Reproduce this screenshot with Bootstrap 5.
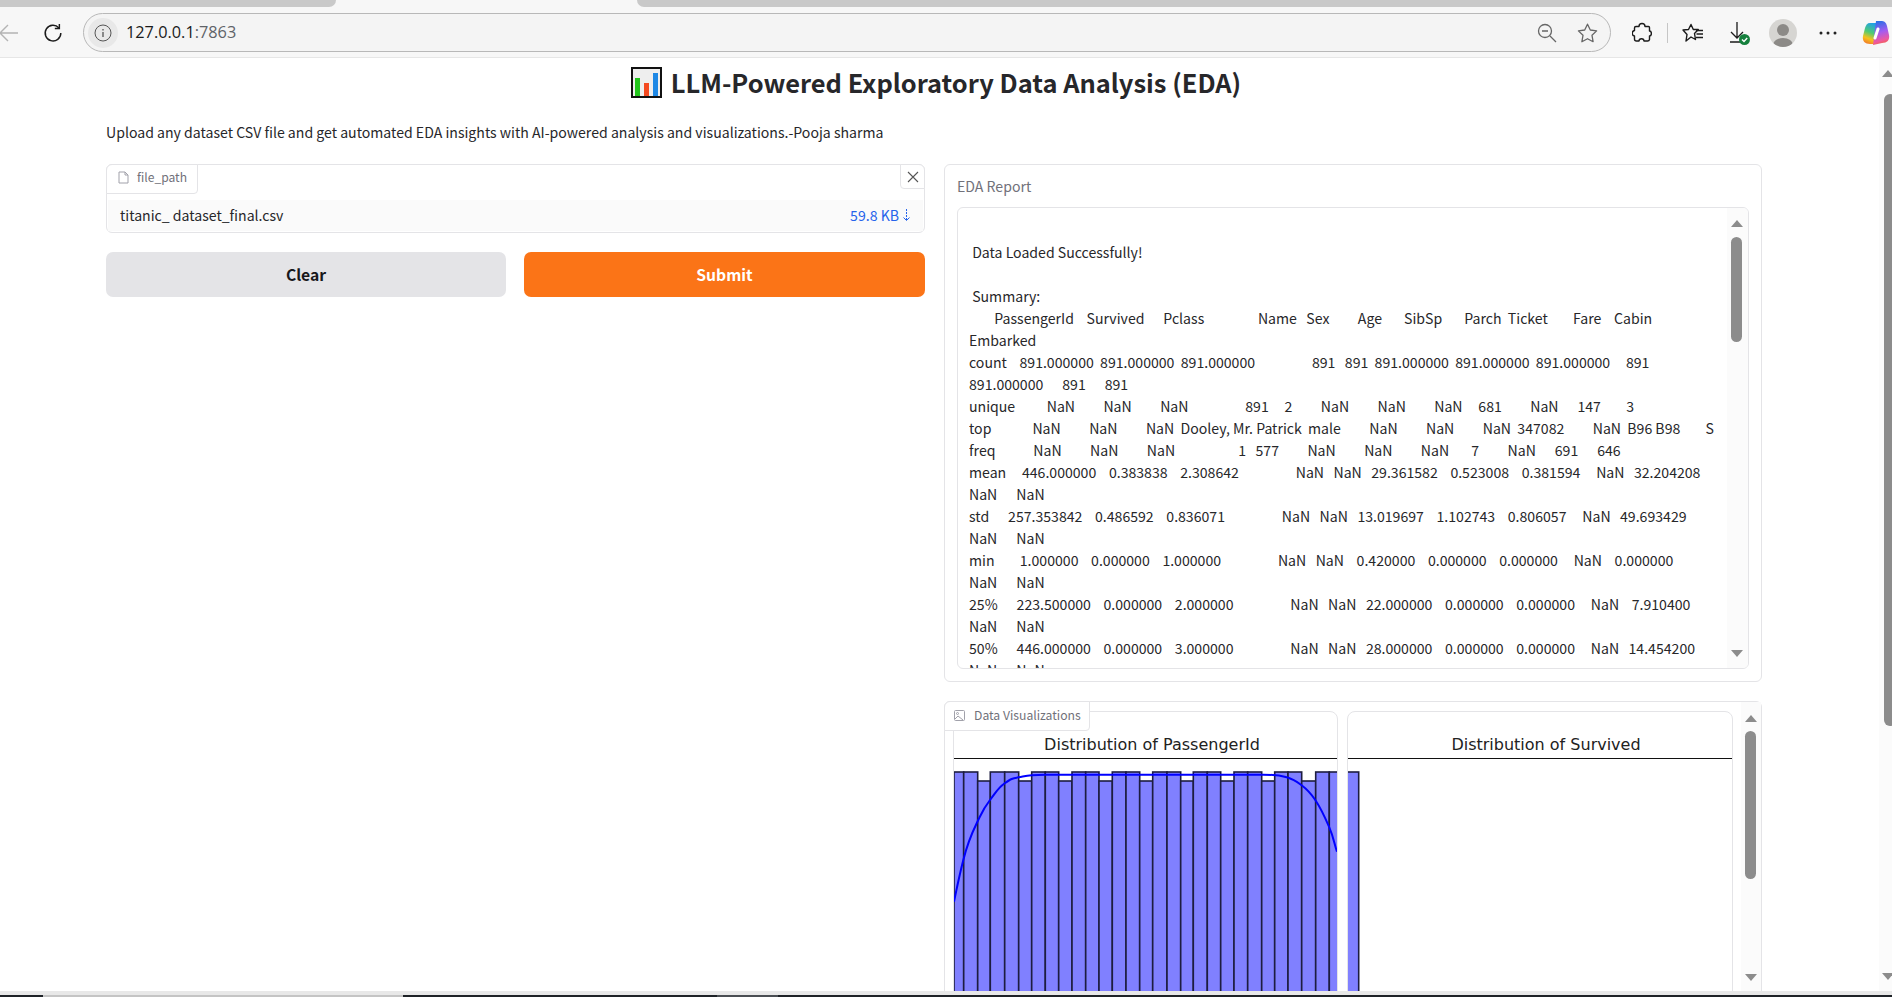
<!DOCTYPE html>
<html lang="en">
<head>
  <meta charset="UTF-8" />
  <meta name="viewport" content="width=device-width, initial-scale=1" />
  <title>LLM-Powered Exploratory Data Analysis (EDA)</title>
  <link href="https://cdn.jsdelivr.net/npm/bootstrap@5.3.3/dist/css/bootstrap.min.css" rel="stylesheet">
  <style>
    body {
      font-family: "Noto Sans CJK SC", "Noto Sans", sans-serif;
      color: #27272a;
      background: #fff;
      font-size: 14.1px;
    }
    /* browser chrome */
    .tab-strip { height: 7px; background: #f7f7f7; }
    .tab-left { width: 336px; background: #c9c9c9; border-bottom-right-radius: 7px; }
    .tab-right { background: #c9c9c9; border-bottom-left-radius: 7px; margin-left: 301px; }
    .tool-bar { height: 51px; background: #f7f7f7; border-bottom: 1px solid #e6e6e6; padding-top: 1px; }
    .slot-back { width: 18px; }
    .slot-reload { width: 20px; margin-left: 25px; margin-right: 20px; }
    .addr-bar {
      width: 1528px; height: 39px; border: 1px solid #b8b8b8; border-radius: 20px;
      background: #f4f4f4; padding-left: 4px; padding-right: 12px;
      font-family: "Open Sans", sans-serif;
    }
    .addr-info { width: 30px; height: 30px; border-radius: 50%; background: #e8e8e8; }
    .addr-text { margin-left: 8px; font-size: 16.300px; color: #1a1a1a; }
    .addr-text span { color: #5f6368; }
    .addr-icons { gap: 20px; }
    .ico-puzzle { margin-left: 21px; }
    .tool-sep { width: 1px; height: 20px; background: #c6c6c6; margin: 0 14px 0 15px; }
    .ico-down { margin-left: 23px; }
    .avatar-dot { width: 28px; height: 28px; border-radius: 50%; background: #d6d5d2; overflow: hidden; margin-left: 18px; }
    .ico-dots { margin-left: 22px; }
    .ico-copilot { margin-left: 24px; }
    /* page */
    .page-body { height: 933px; padding-left: 106px; }
    .page-inner { width: 1656px; }
    .page-title { height: 31px; margin-top: 9px; gap: 9px; padding-left: 4px; }
    .page-title h1 { font-size: 25.45px; font-weight: 600; line-height: 31px; margin: -2px 0 0; }
    .page-desc { font-size: 14.1px; line-height: 22px; margin: 23px 0 21px; }
    .col-left { width: 819px; margin-right: 19px; }
    .col-right { width: 818px; }
    .panel-box { border: 1px solid #e4e4e7; border-radius: 6px; background: #fff; position: relative; }
    .file-panel { height: 69px; }
    .file-tab {
      position: absolute; left: -1px; top: -1px; width: 92px; height: 30px; font-size: 12.1px; color: #71717a;
      border: 1px solid #e4e4e7; border-radius: 6px 0 4px 0; padding: 0 0 3px 11px; gap: 8px; background: #fff;
    }
    .file-close {
      position: absolute; right: -1px; top: -1px; width: 25px; height: 25px;
      border: 1px solid #e4e4e7; border-radius: 0 6px 0 4px; background: #fff;
    }
    .file-row {
      position: absolute; left: 1px; right: 1px; top: 35px; height: 31px; background: #fafafa;
      padding: 0 13px 0 12px; font-size: 14.1px;
    }
    .file-size { color: #2563eb; font-size: 14.1px; gap: 4px; }
    .act-row { margin-top: 19px; gap: 18px; }
    .act-btn { height: 45px; border: 0; border-radius: 7px; font-weight: 600; font-size: 15.700px; padding: 0; }
    .act-clear { background: #e4e4e7; color: #18181b; width: 400px; }
    .act-submit { background: #fb7417; color: #fff; width: 401px; }
    .report-panel { height: 518px; padding: 11px 12px 12px; }
    .report-label { color: #71717a; font-size: 14.1px; line-height: 20px; margin-bottom: 11px; }
    .report-box {
      height: 462px; border: 1px solid #e4e4e7; border-radius: 6px; padding: 11px 11px;
      overflow: hidden; position: relative;
    }
    .report-text {
      font-family: inherit; font-size: 14.1px; line-height: 22px; margin: 0; white-space: pre;
      color: #27272a; overflow: hidden;
    }
    .scroll-gutter { position: absolute; top: 0; bottom: 0; right: 0; width: 20px; background: #fbfbfb; }
    .scroll-thumb { position: absolute; background: #8c8c8c; border-radius: 6px; left: 4px; width: 11px; }
    .arrow-up, .arrow-down {
      position: absolute; left: 4px; width: 0; height: 0;
      border-left: 6px solid transparent; border-right: 6px solid transparent;
    }
    .arrow-up { border-bottom: 7px solid #8c8c8c; }
    .arrow-down { border-top: 7px solid #8c8c8c; }
    .report-box .scroll-gutter { width: 21px; }
    .report-box .arrow-up { top: 12px; }
    .report-box .arrow-down { top: 442px; }
    .report-box .scroll-thumb { top: 29px; height: 105px; }
    .viz-panel { margin-top: 19px; height: 420px; padding: 9px 0 0 8px; gap: 9px; }
    .viz-tab {
      position: absolute; left: -1px; top: -1px; width: 146px; height: 30px; z-index: 2;
      background: #fff; border: 1px solid #e4e4e7; border-radius: 6px 0 4px 0;
      color: #71717a; font-size: 12.2px; padding: 0 0 2px 9px; gap: 9px;
    }
    .chart-card { height: 400px; border: 1px solid #e4e4e7; border-radius: 8px; overflow: hidden; background: #fff; }
    .chart-a { width: 385px; }
    .chart-b { width: 386px; }
    .chart-title {
      width: 396px; height: 47px; border-bottom: 1.5px solid #111; text-align: center; padding-top: 21px;
      font-family: "DejaVu Sans", sans-serif; font-size: 16px; line-height: 24px; color: #222;
    }
    .chart-svg { display: block; }
    .bar-rect { fill: #8080ff; stroke: #1d1d40; stroke-width: 1.6; }
    .kde-line { fill: none; stroke: #0000ff; stroke-width: 2; stroke-linejoin: round; }
    .viz-panel .scroll-gutter { width: 20px; }
    .viz-panel .arrow-up { top: 13px; }
    .viz-panel .arrow-down { top: 272px; }
    .viz-panel .scroll-thumb { top: 29px; height: 148px; }
    .page-scroll { position: absolute; top: 0; bottom: 0; right: 0; width: 13px; background: #fbfbfb; }
    .page-scroll .scroll-thumb { left: 5px; width: 12px; top: 36px; height: 632px; }
    .page-scroll .arrow-up { left: 3px; top: 12px; }
    .page-scroll .arrow-down { left: 3px; top: 915px; }
    /* bottom bar */
    .win-line { height: 4px; background: #e8e8e8; }
    .win-bar { height: 2px; background: #1e2227; }
    .win-a { width: 360px; margin-left: 43px; background: #c4c4c4; }
    .win-b { width: 61px; margin-left: 314px; background: #4a4e53; }
  </style>
</head>
<body class="d-flex flex-column vh-100 overflow-hidden">

  <!-- tabs -->
  <div class="tab-strip d-flex">
    <div class="tab-left"></div>
    <div class="tab-right flex-grow-1"></div>
  </div>

  <!-- toolbar -->
  <div class="tool-bar d-flex align-items-center">
    <div class="slot-back d-flex">
      <svg width="18" height="18" viewBox="0 0 18 18" fill="none" stroke="#b4b4b4" stroke-width="1.4"><path d="M18 9H0M8 1 0 9l8 8"/></svg>
    </div>
    <div class="slot-reload d-flex">
      <svg width="22" height="22" viewBox="0 0 22 22" fill="none" stroke="#1b1b1b" stroke-width="1.6"><path d="M17.5 5.5A8.6 8.6 0 1 0 19.6 11"/><path d="M18 1v5h-5"/></svg>
    </div>
    <div class="addr-bar d-flex align-items-center">
      <div class="addr-info d-flex align-items-center justify-content-center">
        <svg width="18" height="18" viewBox="0 0 18 18" fill="none" stroke="#555"><circle cx="9" cy="9" r="8"/><path d="M9 8v5M9 5v1.4" stroke-width="1.3"/></svg>
      </div>
      <div class="addr-text">127.0.0.1<span>:7863</span></div>
      <div class="addr-icons d-flex align-items-center ms-auto">
        <svg width="20" height="20" viewBox="0 0 20 20" fill="none" stroke="#666" stroke-width="1.3"><circle cx="8" cy="8" r="6.5"/><path d="M5 8h6M13 13l6 6"/></svg>
        <svg width="21" height="20" viewBox="0 0 21 20" fill="none" stroke="#666" stroke-width="1.3" stroke-linejoin="round"><path d="M10.5 1.2l2.8 5.8 6.3.9-4.6 4.4 1.1 6.4-5.6-3-5.6 3 1.1-6.4L1.400 7.900l6.300-.9z"/></svg>
      </div>
    </div>
    <svg class="ico-puzzle" width="20" height="21" viewBox="0 0 20 21" fill="none" stroke="#1b1b1b" stroke-width="1.4" stroke-linejoin="round"><path d="M7 4.500C7 .5 13 .5 13 4.500h3.500a1 1 0 0 1 1 1V9C20 9 20 14 17.500 14v3.500a2 2 0 0 1-2 1.500H12c0-3-5-3-5 0H4.500a2 2 0 0 1-2-2V14C-.5 13.500-.5 9 2.500 8.500V6a1.500 1.500 0 0 1 1.500-1.500z"/></svg>
    <div class="tool-sep"></div>
    <svg width="22" height="20" viewBox="0 0 22 20" fill="none" stroke="#1b1b1b" stroke-width="1.4" stroke-linejoin="round"><path d="M9 1.500l2.300 5h5l-3.800 4 1 6-4.500-2.500L4 18l1-6.500L1 7l5.500-.5z"/><path d="M14 7.500h7M14.500 11h6.500M14 14.500h7"/></svg>
    <svg class="ico-down" width="24" height="24" viewBox="0 0 24 24" fill="none"><path d="M10 1v15M4 11l6 6 6-6M3 21h14" stroke="#1b1b1b" stroke-width="1.3"/><circle cx="17.500" cy="18.500" r="5.500" fill="#15803d"/><path d="M15 18.500l2 2 3.200-3.500" stroke="#fff" stroke-width="1.400"/></svg>
    <div class="avatar-dot">
      <svg width="28" height="28" viewBox="0 0 28 28"><circle cx="14" cy="11" r="6" fill="#8c8a87"/><ellipse cx="14" cy="26" rx="10" ry="7" fill="#8c8a87"/></svg>
    </div>
    <svg class="ico-dots" width="18" height="4" viewBox="0 0 18 4" fill="#222"><circle cx="2" cy="2" r="1.500"/><circle cx="9" cy="2" r="1.500"/><circle cx="16" cy="2" r="1.500"/></svg>
    <svg class="ico-copilot flex-shrink-0" width="30" height="28" viewBox="0 0 30 28" fill="none">
      <defs>
        <linearGradient id="copA" x1="0.6" y1="0" x2="0.3" y2="1"><stop offset="0" stop-color="#1f9fe8"/><stop offset=".45" stop-color="#4fcb74"/><stop offset=".75" stop-color="#f6c21c"/><stop offset="1" stop-color="#f07a2a"/></linearGradient>
        <linearGradient id="copB" x1="0.4" y1="0" x2="0.6" y2="1"><stop offset="0" stop-color="#2a6fe6"/><stop offset=".45" stop-color="#a45cf0"/><stop offset=".8" stop-color="#ee5aa0"/><stop offset="1" stop-color="#f2603a"/></linearGradient>
      </defs>
      <path d="M9 4h9l-5 21H9c-5 0-8-3-7-8l2-8c1-3 2-5 5-5z" fill="url(#copA)"/>
      <path d="M15 2h5c3 0 5 1 6 5l2 9c1 5-2 8-7 8l-9 2z" fill="url(#copB)"/>
      <path d="M17 10l-3 9" stroke="#fff" stroke-width="3" stroke-linecap="round"/>
    </svg>
  </div>

  <!-- page -->
  <div class="page-body flex-grow-1 position-relative overflow-hidden">
    <div class="page-inner">
      <div class="page-title d-flex justify-content-center align-items-center">
        <svg width="31" height="31" viewBox="0 0 31 31">
          <rect x="1" y="1" width="29" height="29" fill="#eeeeee" stroke="#111" stroke-width="2"/>
          <rect x="4" y="11" width="5" height="18" fill="#22c61c"/>
          <rect x="13" y="16" width="5" height="13" fill="#f44a20"/>
          <rect x="22" y="6" width="5" height="23" fill="#1e88e5"/>
        </svg>
        <h1>LLM-Powered Exploratory Data Analysis (EDA)</h1>
      </div>
      <p class="page-desc">Upload any dataset CSV file and get automated EDA insights with AI-powered analysis and visualizations.-Pooja sharma</p>

      <div class="d-flex align-items-start">
        <div class="col-left">
          <div class="panel-box file-panel">
            <div class="file-tab d-flex align-items-center">
              <svg width="11" height="13" viewBox="0 0 11 13" fill="none" stroke="#a1a1aa"><path d="M1 1h6l3 3v8H1zM7 1v3h3"/></svg>
              file_path
            </div>
            <div class="file-close d-flex align-items-center justify-content-center">
              <svg width="12" height="12" viewBox="0 0 12 12" stroke="#555" stroke-width="1.1"><path d="M1 1l10 10M11 1 1 11"/></svg>
            </div>
            <div class="file-row d-flex align-items-center justify-content-between">
              <span>titanic_ dataset_final.csv</span>
              <span class="file-size d-flex align-items-center">59.8 KB
                <svg width="7" height="13" viewBox="0 0 7 13" fill="none" stroke="#2563eb"><path d="M3.500 0v11" stroke-dasharray="2 1"/><path d="M.5 8.500l3 3 3-3"/></svg>
              </span>
            </div>
          </div>
          <div class="act-row d-flex">
            <button class="btn act-btn act-clear">Clear</button>
            <button class="btn act-btn act-submit">Submit</button>
          </div>
        </div>

        <div class="col-right">
          <div class="panel-box report-panel">
            <div class="report-label">EDA Report</div>
            <div class="report-box">
<pre class="report-text">

 Data Loaded Successfully!

 Summary:
        PassengerId    Survived      Pclass                 Name   Sex         Age       SibSp       Parch  Ticket        Fare    Cabin
Embarked
count    891.000000  891.000000  891.000000                  891   891  891.000000  891.000000  891.000000     891
891.000000      891      891
unique          NaN         NaN         NaN                  891     2         NaN         NaN         NaN     681         NaN      147        3
top             NaN         NaN         NaN  Dooley, Mr. Patrick  male         NaN         NaN         NaN  347082         NaN  B96 B98        S
freq            NaN         NaN         NaN                    1   577         NaN         NaN         NaN       7         NaN      691      646
mean     446.000000    0.383838    2.308642                  NaN   NaN   29.361582    0.523008    0.381594     NaN   32.204208
NaN      NaN
std      257.353842    0.486592    0.836071                  NaN   NaN   13.019697    1.102743    0.806057     NaN   49.693429
NaN      NaN
min        1.000000    0.000000    1.000000                  NaN   NaN    0.420000    0.000000    0.000000     NaN    0.000000
NaN      NaN
25%      223.500000    0.000000    2.000000                  NaN   NaN   22.000000    0.000000    0.000000     NaN    7.910400
NaN      NaN
50%      446.000000    0.000000    3.000000                  NaN   NaN   28.000000    0.000000    0.000000     NaN   14.454200
NaN      NaN
</pre>
              <div class="scroll-gutter">
                <div class="arrow-up"></div>
                <div class="scroll-thumb"></div>
                <div class="arrow-down"></div>
              </div>
            </div>
          </div>

          <div class="panel-box viz-panel d-flex">
            <div class="viz-tab d-flex align-items-center">
              <svg width="11" height="11" viewBox="0 0 11 11" fill="none" stroke="#a1a1aa"><rect x=".5" y=".5" width="10" height="10" rx="1"/><path d="M1 9l3-3 5 4"/><circle cx="3.500" cy="3.500" r="1"/></svg>
              Data Visualizations
            </div>
            <div class="chart-card chart-a">
              <div class="chart-title">Distribution of PassengerId</div>
              <svg class="chart-svg" width="383" height="300" viewBox="0 0 383 300">
                <rect class="bar-rect" x="0" y="13" width="9.700" height="300"/>
                <rect class="bar-rect" x="9.700" y="13" width="14" height="300"/>
                <rect class="bar-rect" x="23.700" y="22" width="12.600" height="300"/>
                <rect class="bar-rect" x="36.300" y="13" width="14.400" height="300"/>
                <rect class="bar-rect" x="50.700" y="13" width="14" height="300"/>
                <rect class="bar-rect" x="64.700" y="22" width="13" height="300"/>
                <rect class="bar-rect" x="77.700" y="13" width="13.600" height="300"/>
                <rect class="bar-rect" x="91.300" y="13" width="13.400" height="300"/>
                <rect class="bar-rect" x="104.700" y="22" width="13.300" height="300"/>
                <rect class="bar-rect" x="118" y="13" width="13.700" height="300"/>
                <rect class="bar-rect" x="131.700" y="13" width="13.300" height="300"/>
                <rect class="bar-rect" x="145" y="22" width="13.300" height="300"/>
                <rect class="bar-rect" x="158.300" y="13" width="13.700" height="300"/>
                <rect class="bar-rect" x="172" y="13" width="13.700" height="300"/>
                <rect class="bar-rect" x="185.700" y="22" width="13" height="300"/>
                <rect class="bar-rect" x="198.700" y="13" width="14.300" height="300"/>
                <rect class="bar-rect" x="213" y="13" width="13.700" height="300"/>
                <rect class="bar-rect" x="226.700" y="22" width="12.600" height="300"/>
                <rect class="bar-rect" x="239.300" y="13" width="14" height="300"/>
                <rect class="bar-rect" x="253.300" y="13" width="13.400" height="300"/>
                <rect class="bar-rect" x="266.700" y="22" width="13.300" height="300"/>
                <rect class="bar-rect" x="280" y="13" width="13.700" height="300"/>
                <rect class="bar-rect" x="293.700" y="13" width="14" height="300"/>
                <rect class="bar-rect" x="307.700" y="22" width="13" height="300"/>
                <rect class="bar-rect" x="320.700" y="13" width="13.300" height="300"/>
                <rect class="bar-rect" x="334" y="13" width="13.700" height="300"/>
                <rect class="bar-rect" x="347.700" y="22" width="14" height="300"/>
                <rect class="bar-rect" x="361.700" y="13" width="13.600" height="300"/>
                <rect class="bar-rect" x="375.300" y="13" width="13" height="300"/>
                <path class="kde-line" d="M0 142.700C3 128 6 114 9.300 101S17 76 22.700 64.300 29 50 36 41 44 29 50.700 24.300 58 19.500 64.700 18.300 72 16.800 77.700 16.300 85 15.700 91.300 15.700H309.300C318 15.700 326 16.500 332.700 18.300S342 22 347.300 26 356 33 361.300 41 370 56 375 67.700 380 84 383 92.700"/>
              </svg>
            </div>
            <div class="chart-card chart-b">
              <div class="chart-title">Distribution of Survived</div>
              <svg class="chart-svg" width="385" height="300" viewBox="0 0 385 300">
                <rect class="bar-rect" x="-2" y="13" width="12.700" height="300"/>
              </svg>
            </div>
            <div class="scroll-gutter">
              <div class="arrow-up"></div>
              <div class="scroll-thumb"></div>
              <div class="arrow-down"></div>
            </div>
          </div>
        </div>
      </div>
    </div>

    <div class="page-scroll">
      <div class="arrow-up"></div>
      <div class="scroll-thumb"></div>
      <div class="arrow-down"></div>
    </div>
  </div>

  <div class="win-line"></div>
  <div class="win-bar d-flex">
    <div class="win-a"></div>
    <div class="win-b"></div>
  </div>
</body>
</html>
